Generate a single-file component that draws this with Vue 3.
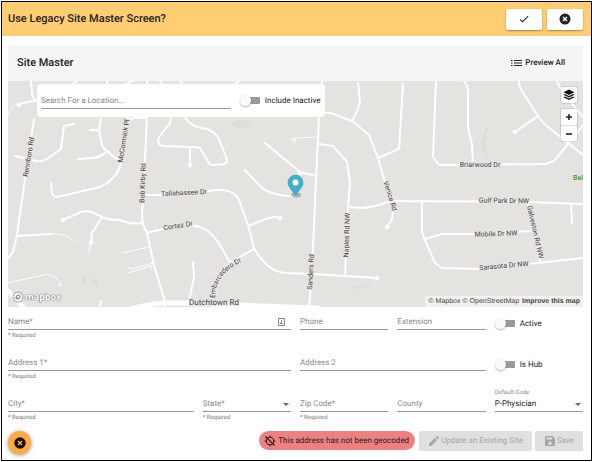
<script setup>
import { ref } from 'vue'

const includeInactive = ref(false)
const search = ref('')
const state = ref('')
const defaultCode = ref('P')

const fields = [
  { id: 'name', label: 'Name*', span: 3, required: true, contact: true },
  { id: 'phone', label: 'Phone', span: 1 },
  { id: 'extension', label: 'Extension', span: 1 },
  { id: 'active', label: 'Active', toggle: true },
  { id: 'address1', label: 'Address 1*', span: 3, required: true },
  { id: 'address2', label: 'Address 2', span: 2 },
  { id: 'hub', label: 'Is Hub', toggle: true },
  { id: 'city', label: 'City*', span: 2, required: true },
  { id: 'state', label: 'State*', span: 1, required: true, select: true },
  { id: 'zip', label: 'Zip Code*', span: 1, required: true },
  { id: 'county', label: 'County', span: 1 },
]

const roads = [
  'M31 81L32 94L35 101',
  'M19 104L37 100',
  'M34 119L22 200L17 235L13 252L8 258',
  'M15 156L36 161Q42 162 47 159L61 149L64 126L74 124',
  'M101 117L99 130L102 145Q103 148 107 151L115 158L122 162',
  'M90 130L99 130',
  'M78 159L92 158Q102 157 107 151',
  'M128 118L122 162L117 173Q110 183 100 187L57 197Q53 197 52 193L51 183',
  'M128 121Q131 118 135 118L147 118',
  'M147 117L144 180L142 215Q142 225 147 233L154 265L165 302L165 307',
  'M171 117L170 123L159 137Q156 145 163 146L193 147Q198 147 200 148L207 160Q209 165 213 165L224 164Q228 163 226 157L218 137Q213 131 207 129L197 127Q189 124 185 117',
  'M190 147L190 165',
  'M146 195L163 195',
  'M208 191Q222 189 228 191Q237 194 239 200L248 225L254 248Q258 256 267 265Q275 272 285 273L313 274L377 278',
  'M248 226L268 218L275 217L280 218',
  'M147 233L163 229',
  'M190 225Q206 227 211 234Q218 240 229 261',
  'M254 249L238 258Q224 266 217 278Q211 290 212 303',
  'M63 220L81 212Q88 210 94 213L102 217Q108 220 120 220Q132 225 142 223',
  'M102 217L92 233L91 243',
  'M17 236L50 234',
  'M100 308L101 301',
  'M193 262L194 277L189 302',
  'M322 81L319 118L315 200L312 275L309 307',
  'M320 113Q331 112 336 115L352 121L369 135L378 158L385 182L394 203L392 219L387 227',
  'M358 83L360 103Q357 112 352 121',
  'M319 144L333 146Q337 150 347 162L350 182L348 207L345 276',
  'M265 143L300 172L316 176',
  'M245 170L263 189Q278 197 295 196',
  'M348 207L362 208Q376 207 390 201L528 202L583 204',
  'M403 84L399 149L378 158',
  'M436 81L433 157L439 165L545 164L554 161L568 144L583 125',
  'M464 81Q468 86 468 92L468 127L472 145L473 165',
  'M519 81L520 88L538 116Q546 127 552 130L568 143L583 155',
  'M538 116L515 132',
  'M557 81L562 92L583 117',
  'M422 202L422 232L425 240L435 263L442 268L480 269L528 264L583 258',
  'M425 239L442 234L477 234L534 231',
  'M528 203L540 262',
  'M571 204L572 223',
  'M73 84L78 80M107 80L107 84M127 84Q132 80 135 80M147 80L147 84M160 80L161 84M180 80L182 84M235 84L241 80',
]

const lanes = [
  'M8 115Q11 106 19 104',
  'M50 234Q67 233 73 241',
  'M91 243L89 253',
  'M122 253L149 247',
  'M128 267L132 269L153 263M128 273L154 265M150 266L152 270',
  'M8 283L43 275Q50 273 56 278L61 283Q62 286 60 287Q57 285 60 283',
  'M293 141Q290 138 295 138Q297 142 293 141M295 138L318 137',
]

const deadEnds = [
  [19, 105], [63, 220], [91, 243], [190, 165], [280, 218],
  [300, 173], [377, 278], [387, 227], [515, 132],
]

const labels = [
  { text: 'Rennboro Rd', x: 29, y: 157, turn: -81 },
  { text: 'McCormick Pl', x: 124, y: 141, turn: -81 },
  { text: 'Bob Kirby Rd', x: 143, y: 183, turn: -88 },
  { text: 'Tallahassee Dr', x: 184, y: 193, turn: -3 },
  { text: 'Cortez Dr', x: 178, y: 226, turn: -9 },
  { text: 'Sanders Rd', x: 311, y: 272, turn: -87 },
  { text: 'Naples Rd NW', x: 347, y: 235, turn: -88 },
  { text: 'Venice Rd', x: 390, y: 196, turn: 73 },
  { text: 'Briarwood Dr', x: 480, y: 165, turn: 0 },
  { text: 'Gulf Park Dr NW', x: 504, y: 201, turn: 1 },
  { text: 'Mobile Dr NW', x: 496, y: 234, turn: -2 },
  { text: 'Sarasota Dr NW', x: 504, y: 266, turn: -5 },
  { text: 'Galveston Rd NW', x: 535, y: 232, turn: 77 },
]
</script>

<template>
  <main class="frame">
    <header class="banner">
      <h1>Use Legacy Site Master Screen?</h1>
      <div class="banner-actions">
        <button type="button" class="raised" aria-label="Confirm">
          <svg class="icon" viewBox="0 0 24 24"><path d="M9 16.2 4.8 12l-1.4 1.4L9 19 21 7l-1.4-1.4z" /></svg>
        </button>
        <button type="button" class="raised" aria-label="Cancel">
          <svg class="icon" viewBox="0 0 24 24"><circle cx="12" cy="12" r="11" /><path class="cross" d="M8 8l8 8M16 8l-8 8" /></svg>
        </button>
      </div>
    </header>

    <section class="content">
      <div class="toolbar">
        <h2>Site Master</h2>
        <button type="button" class="preview">
          <svg class="list-icon" viewBox="0 0 11 8"><path d="M0 1.500h1.500M0 4h1.500M0 6.500h1.500M3 1.500h8M3 4h8M3 6.500h8" /></svg>
          Preview All
        </button>
      </div>

      <div class="map">
        <svg class="streets" viewBox="8 81 575 226" preserveAspectRatio="xMidYMid slice">
          <g class="shade">
            <ellipse cx="241" cy="124" rx="9" ry="4" />
            <path d="M82 277l4 1-1 5-4-1zM92 277l6 3 1 5-6-2zM350 288l20-4-4 4-14 1z" />
            <path class="creek" d="M487 129Q480 143 487 157" />
          </g>
          <path v-for="d in lanes" :key="d" class="lane" :d="d" />
          <path v-for="d in roads" :key="d" class="road" :d="d" />
          <path class="main-road" d="M2 286L12 295L27 311M128 310Q150 303 165 303L190 303L237 305L318 308" />
          <circle v-for="[x, y] in deadEnds" :key="`${x}-${y}`" class="dead-end" :cx="x" :cy="y" r="2.3" />
          <text
            v-for="l in labels"
            :key="l.text"
            class="street-name"
            :x="l.x"
            :y="l.y"
            :transform="`rotate(${l.turn} ${l.x} ${l.y})`"
          >{{ l.text }}</text>
          <path id="embarcadero" class="guide" d="M213 298Q213 283 223 272Q230 265 252 254" />
          <text class="street-name along"><textPath href="#embarcadero">Embarcadero Dr</textPath></text>
          <text class="street-name major" x="214" y="302">Dutchtown Rd</text>
          <text class="park" x="573" y="180">Bel</text>
          <ellipse class="pin-shadow" cx="296" cy="195" rx="5" ry="2.4" />
          <path class="pin" d="M295.500 196C293.500 191 288 188 288 182.500a7.500 7.500 0 0 1 15 0C303 188 297.500 191 295.500 196z" />
          <circle class="pin-hole" cx="295.500" cy="182.500" r="3" />
        </svg>

        <div class="search">
          <input id="search" v-model="search" type="text" aria-label="Search For a Location" placeholder="Search For a Location..." />
          <label class="toggle">
            <input v-model="includeInactive" type="checkbox" />
            Include Inactive
          </label>
        </div>

        <div class="controls">
          <button type="button" class="control" aria-label="Layers">
            <svg class="icon layers" viewBox="0 0 24 24"><path d="M12 1 23 6.500 12 12 1 6.500z" /><path d="M4 10l8 4 8-4 3 1.500L12 17 1 11.500zM4 15l8 4 8-4 3 1.500L12 22 1 16.500z" /></svg>
          </button>
          <div class="zoom">
            <button type="button" class="control" aria-label="Zoom in">
              <svg class="sign" viewBox="0 0 8 8"><path d="M1 4h6M4 1v6" /></svg>
            </button>
            <button type="button" class="control" aria-label="Zoom out">
              <svg class="sign" viewBox="0 0 8 8"><path d="M1 4h6" /></svg>
            </button>
          </div>
        </div>

        <a class="brand" href="#mapbox">
          <svg class="brand-mark" viewBox="0 0 12 12"><circle class="rim" cx="6" cy="6" r="5.500" /><circle class="disc" cx="6" cy="6" r="4.600" /><path class="drop" d="M3.500 8.500Q3 3.500 6.500 3.300A2.600 2.600 0 0 1 8.700 6Q8.500 9 3.500 8.500z" /><circle class="disc" cx="6.400" cy="5.700" r="1" /></svg>
          mapbox
        </a>
        <p class="credits">
          <a href="#mapbox">© Mapbox</a>
          <a href="#osm">© OpenStreetMap</a>
          <a class="improve" href="#improve">Improve this map</a>
        </p>
      </div>

      <form @submit.prevent>
        <div class="fields">
          <template v-for="f in fields" :key="f.id">
            <label v-if="f.toggle" class="toggle field-toggle">
              <input type="checkbox" />
              {{ f.label }}
            </label>
            <div v-else class="field" :class="`span-${f.span}`">
              <label :for="f.id">{{ f.label }}</label>
              <select v-if="f.select" :id="f.id" v-model="state">
                <option value=""></option>
              </select>
              <input v-else :id="f.id" type="text" />
              <svg v-if="f.select" class="caret" viewBox="0 0 6 3"><path d="M0 0h6L3 3z" /></svg>
              <svg v-if="f.contact" class="contact" viewBox="0 0 7 8"><path d="M.5.5h6v7h-6z" /><path d="M2 5.500h3M3.500 2v3" /></svg>
              <small v-if="f.required">* Required</small>
            </div>
          </template>
          <div class="field filled">
            <label for="code">Default Code</label>
            <select id="code" v-model="defaultCode">
              <option value="P">P-Physician</option>
            </select>
            <svg class="caret" viewBox="0 0 6 3"><path d="M0 0h6L3 3z" /></svg>
          </div>
        </div>

        <footer class="actions">
          <button type="button" class="fab" aria-label="Close">
            <svg class="icon" viewBox="0 0 24 24"><circle cx="12" cy="12" r="11.500" /><path class="cross" d="M8 8l8 8M16 8l-8 8" /></svg>
          </button>
          <span class="status">
            <svg class="icon off" viewBox="0 0 24 24"><circle cx="12" cy="12" r="7.500" /><path d="M12 1v4M12 19v4M1 12h4M19 12h4M3 3l18 18" /></svg>
            This address has not been geocoded
          </span>
          <button type="button" class="flat" disabled>
            <svg class="icon" viewBox="0 0 24 24"><path d="M2 17.500V22h4.500L18 10.500 13.500 6zM21.500 7a1.300 1.300 0 0 0 0-1.800l-2.700-2.700a1.300 1.300 0 0 0-1.800 0L15 4.500 19.500 9z" /></svg>
            Update an Existing Site
          </button>
          <button type="submit" class="flat" disabled>
            <svg class="icon" viewBox="0 0 24 24"><path fill-rule="evenodd" d="M17 2H4a2 2 0 0 0-2 2v16a2 2 0 0 0 2 2h16a2 2 0 0 0 2-2V7zM12 20a3.500 3.500 0 1 1 0-7 3.500 3.500 0 0 1 0 7zM16 9H5V5h11z" /></svg>
            Save
          </button>
        </footer>
      </form>
    </section>
  </main>
</template>

<style>
body {
  background: #fff;
}
</style>

<style scoped>
* {
  box-sizing: border-box;
}

.frame {
  margin: 1px 0 1px 1px;
  border: 1px solid #000;
  color: #222;
  font-family: Roboto, sans-serif;
  font-size: 8px;
  line-height: 10px;
  text-rendering: geometricPrecision;
}

button,
input,
select {
  margin: 0;
  padding: 0;
  border: 0;
  border-radius: 0;
  background: none;
  color: inherit;
  font: inherit;
  text-rendering: inherit;
}

button {
  display: flex;
  align-items: center;
  justify-content: center;
}

h1,
h2,
p {
  margin: 0;
}

a {
  color: inherit;
  text-decoration: none;
}

.icon {
  width: 12px;
  height: 12px;
  flex: none;
  fill: currentColor;
}

.cross {
  fill: none;
  stroke: #fff;
  stroke-width: 3;
}

.banner {
  display: flex;
  align-items: center;
  justify-content: space-between;
  height: 34px;
  padding: 0 8px 0 6px;
  background: #ffcd72;
}

h1,
h2 {
  font-size: 11px;
  font-weight: 500;
  line-height: 16px;
}

.banner-actions {
  display: flex;
  gap: 5px;
}

.raised {
  width: 36px;
  height: 21px;
  border-radius: 2px;
  background: #fff;
  box-shadow: 0 1px 2px rgba(0, 0, 0, 0.35);
}

.content {
  padding: 9px 8px 6px 6px;
}

.toolbar {
  display: flex;
  align-items: center;
  justify-content: space-between;
  height: 36px;
  padding: 0 18px 0 9px;
  background: #f5f5f5;
}

.preview {
  gap: 3px;
  font-weight: 500;
}

.list-icon {
  width: 11px;
  height: 8px;
  fill: none;
  stroke: currentColor;
  stroke-width: 1.2;
}

.map {
  position: relative;
  height: 226px;
  overflow: hidden;
  background: #e4e3df;
}

.streets {
  display: block;
  width: 100%;
  height: 100%;
}

.shade {
  fill: #dddcd8;
}

.creek {
  fill: none;
  stroke: #dddcd8;
  stroke-width: 3;
}

.road,
.lane,
.main-road,
.guide {
  fill: none;
  stroke: #fff;
  stroke-width: 2;
  stroke-linecap: round;
  stroke-linejoin: round;
}

.lane {
  stroke-width: 1;
}

.main-road {
  stroke-width: 5;
}

.guide {
  stroke: none;
}

.dead-end {
  fill: #fff;
}

.street-name {
  fill: #444;
  stroke: #e8e7e4;
  stroke-width: 2;
  paint-order: stroke;
  font-size: 7px;
  text-anchor: middle;
  dominant-baseline: central;
}

.along {
  text-anchor: start;
}

.major {
  font-size: 8px;
}

.park {
  fill: #3f9430;
  font-size: 7px;
  font-weight: 500;
}

.pin {
  fill: #3fb1ce;
  stroke: #2d92ad;
  stroke-width: 0.5;
}

.pin-hole {
  fill: #fff;
}

.pin-shadow {
  fill: #888;
  opacity: 0.6;
}

.search {
  position: absolute;
  top: 3px;
  left: 29px;
  display: flex;
  align-items: center;
  gap: 9px;
  width: 50%;
  height: 33px;
  padding: 0 4px;
  border-radius: 4px;
  background: #fff;
}

.search > input {
  flex: 1;
  min-width: 0;
  height: 16px;
  border-bottom: 1px solid #999;
}

.search > input::placeholder {
  color: #888;
  opacity: 1;
}

.toggle {
  display: flex;
  align-items: center;
  gap: 5px;
}

.toggle input {
  display: flex;
  align-items: center;
  width: 20px;
  height: 11px;
  appearance: none;
  background: linear-gradient(#999, #999) right center / 14px 7px no-repeat;
  border-radius: 4px;
}

.toggle input::before {
  width: 11px;
  height: 11px;
  border-radius: 50%;
  background: #fafafa;
  box-shadow: 0 1px 2px rgba(0, 0, 0, 0.3);
  content: "";
}

.toggle input:checked::before {
  margin-left: auto;
}

.controls {
  position: absolute;
  top: 6px;
  right: 6px;
  display: grid;
  gap: 6px;
}

.control {
  width: 16px;
  height: 16px;
  border-radius: 2px;
  background: #fff;
  color: #111;
}

.controls > .control,
.zoom {
  border-radius: 2px;
  box-shadow: 0 0 0 1px rgba(0, 0, 0, 0.1);
}

.zoom .control + .control {
  border-top: 1px solid #ddd;
}

.sign {
  width: 8px;
  height: 8px;
  stroke: #222;
  stroke-width: 1.6;
}

.brand {
  position: absolute;
  bottom: 3px;
  left: 4px;
  display: flex;
  align-items: center;
  gap: 1px;
  color: #fff;
  font-family: "Noto Sans", sans-serif;
  font-size: 9px;
  font-weight: 700;
  line-height: 14px;
  text-shadow: 0 0 1px #777, 0 0 1px #777, 0 0 1px #777;
}

.brand-mark {
  width: 12px;
  height: 12px;
}

.rim,
.drop {
  fill: #999;
}

.disc {
  fill: #fff;
}

.credits {
  position: absolute;
  right: 0;
  bottom: 0;
  display: flex;
  gap: 2px;
  padding: 0 3px;
  background: rgba(255, 255, 255, 0.5);
  color: #444;
  font-family: "Liberation Sans", sans-serif;
  font-size: 7px;
  line-height: 11px;
}

.improve {
  margin-left: 1px;
  font-weight: 700;
}

.fields {
  display: grid;
  grid-template-columns: repeat(6, 1fr);
  column-gap: 9px;
  row-gap: 7px;
}

.field {
  display: grid;
  grid-template-columns: 1fr auto;
  grid-template-rows: 7px 16px 11px;
  align-items: center;
  min-width: 0;
}

.span-2 {
  grid-column: span 2;
}

.span-3 {
  grid-column: span 3;
}

.field label {
  grid-area: 2 / 1;
  color: #888;
}

.field input,
.field select {
  grid-area: 2 / 1 / 3 / 3;
  width: 100%;
  min-width: 0;
  height: 16px;
  border-bottom: 1px solid #999;
  appearance: none;
}

.field small {
  grid-area: 3 / 1;
  color: #777;
  font-size: 6px;
  line-height: 8px;
}

.filled label {
  grid-area: 1 / 1;
  font-size: 6px;
  line-height: 7px;
}

.caret {
  grid-area: 2 / 2;
  width: 6px;
  height: 3px;
  margin-right: 2px;
  fill: #666;
  pointer-events: none;
}

.contact {
  grid-area: 2 / 2;
  width: 7px;
  height: 8px;
  margin-right: 6px;
  fill: none;
  stroke: #888;
  stroke-width: 1;
}

.field-toggle {
  align-self: start;
  height: 33px;
}

.actions {
  display: flex;
  align-items: flex-start;
  gap: 3px;
  padding-top: 8px;
}

.fab {
  width: 23px;
  height: 23px;
  margin-right: auto;
  border-radius: 50%;
  background: #ffab40;
  color: #111;
  box-shadow: 0 1px 4px rgba(0, 0, 0, 0.45);
}

.fab .cross {
  stroke: #ffab40;
}

.status {
  display: flex;
  align-items: center;
  gap: 2px;
  height: 19px;
  margin-right: 1px;
  padding: 0 6px 0 5px;
  border-radius: 10px;
  background: #f08080;
}

.off {
  fill: none;
  stroke: currentColor;
  stroke-width: 2.2;
}

.flat {
  gap: 1px;
  height: 20px;
  padding: 0 9px;
  border-radius: 2px;
  background: #e0e0e0;
  color: #a6a6a6;
}
</style>
